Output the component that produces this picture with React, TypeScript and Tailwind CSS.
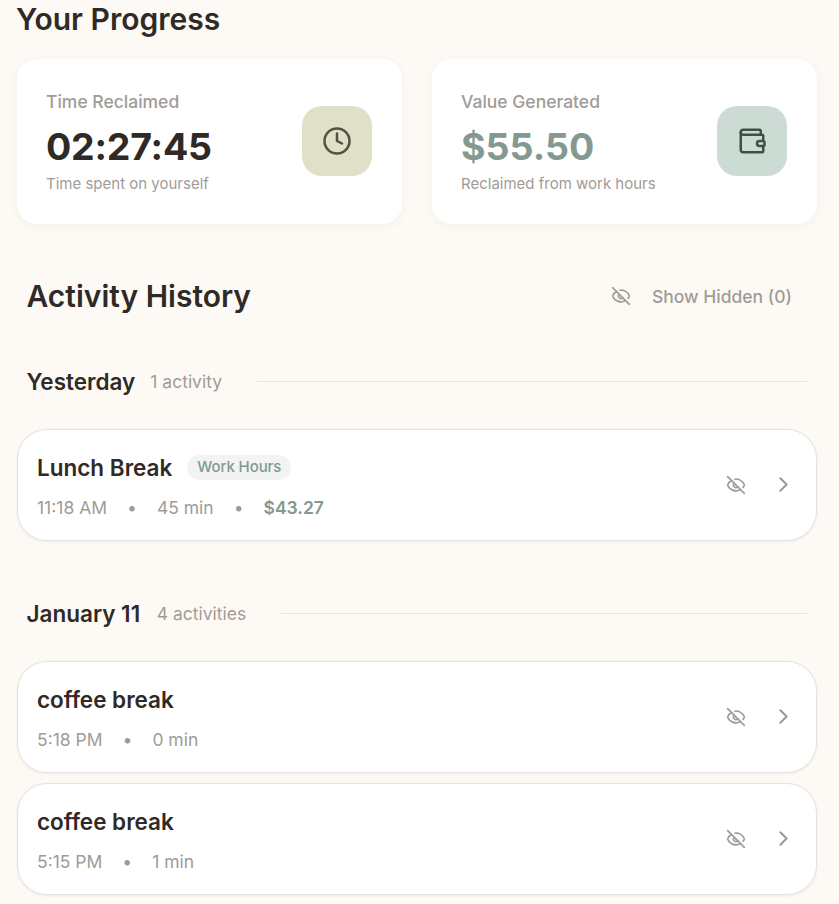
import React from "react";
import { Clock, Wallet, EyeOff, ChevronRight } from "lucide-react";

function StatCard({ label, value, note, accent, children }: { label: string; value: string; note: string; accent?: boolean; children: React.ReactNode }) {
  return (
    <div className="flex h-[165px] w-[385px] items-start justify-between rounded-[20px] bg-white pr-[30px] pl-[29px] shadow-[0_2px_10px_rgba(60,50,40,0.05)]">
      <div className="mt-[30px] whitespace-nowrap">
        <div className="text-[17.5px] leading-[25px] font-medium text-[#a19b96]">{label}</div>
        <div className={accent ? "mt-[10px] text-[37.5px] leading-[45px] font-bold text-[#84998f]" : "mt-[10px] text-[37.5px] leading-[45px] font-bold tracking-[-0.2px] text-[#2f2a26]"}>{value}</div>
        <div className="mt-[5px] text-[15px] leading-5 text-[#a19b96]">{note}</div>
      </div>
      {children}
    </div>
  );
}

function DayHeader({ title, count, wide }: { title: string; count: string; wide?: boolean }) {
  return (
    <div className="flex h-[35px] items-center pr-[10px] pl-[9.5px] whitespace-nowrap">
      <h3 className="text-[22.5px] font-semibold">{title}</h3>
      <span className={wide ? "ml-[16.5px] pt-[2px] text-[17.5px] text-[#a19b96]" : "ml-[15px] pt-[2px] text-[17.5px] text-[#a19b96]"}>{count}</span>
      <div className="ml-[35px] h-px flex-1 bg-[#e6e3de]" />
    </div>
  );
}

function Activity({ title, time, duration, value }: { title: string; time: string; duration: string; value?: string }) {
  return (
    <div className="flex h-[112px] items-center justify-between rounded-[30px] border border-[#e5e2df] bg-white pr-[20px] pl-[19px] shadow-[0_1px_3px_rgba(60,50,40,0.08)]">
      <div className="whitespace-nowrap">
        <div className="flex h-[35px] items-center gap-[15px]">
          <h4 className="text-[22.5px] font-semibold">{title}</h4>
          {value && <span className="flex h-[25px] items-center rounded-full bg-[#f1f4f3] px-[10px] text-[15px] font-medium tracking-[-0.1px] text-[#84998f]">Work Hours</span>}
        </div>
        <div className="mt-[10px] flex h-[25px] items-center gap-[20px] pt-[2px] text-[17.5px] text-[#a19b96]">
          <span>{time}</span><span>•</span><span>{duration}</span>
          {value && <><span>•</span><span className="font-semibold text-[#84998f]">{value}</span></>}
        </div>
      </div>
      <div className="flex items-center gap-[25px] text-[#a19b96]">
        <EyeOff size={20} strokeWidth={2} />
        <ChevronRight className="mb-px" size={25} strokeWidth={2} />
      </div>
    </div>
  );
}

export default function App() {
  return (
    <main className="h-[904px] overflow-hidden bg-[#fdfaf5] pr-[22px] pl-[17px] font-[Inter,sans-serif] text-[#2f2a26] antialiased">
      <h1 className="-ml-px h-[59px] pt-[1px] text-[30px] leading-[37px] font-semibold">Your Progress</h1>
      <section className="flex justify-between">
        <StatCard label="Time Reclaimed" value="02:27:45" note="Time spent on yourself">
          <div className="mt-[47px] flex size-[70px] items-center justify-center rounded-[20px] bg-[#e0dfc8] text-[#525142]"><Clock size={30} /></div>
        </StatCard>
        <StatCard label="Value Generated" value="$55.50" note="Reclaimed from work hours" accent>
          <div className="mt-[47px] flex size-[70px] items-center justify-center rounded-[20px] bg-[#ccdcd4] text-[#3d5148]"><Wallet size={30} /></div>
        </StatCard>
      </section>
      <header className="mt-[50px] flex h-[45px] items-center justify-between pr-[25px] pl-[9.5px]">
        <h2 className="text-[30px] font-semibold">Activity History</h2>
        <div className="flex items-center gap-[21px] text-[17.5px] font-medium text-[#a19b96]"><EyeOff className="mb-[2px]" size={20} /><span className="pt-px">Show Hidden (0)</span></div>
      </header>
      <section className="mt-[45px]">
        <DayHeader title="Yesterday" count="1 activity" />
        <div className="mt-[30px]"><Activity title="Lunch Break" time="11:18 AM" duration="45 min" value="$43.27" /></div>
      </section>
      <section className="mt-[55px]">
        <DayHeader title="January 11" count="4 activities" wide />
        <div className="mt-[30px] flex flex-col gap-[10px]">
          <Activity title="coffee break" time="5:18 PM" duration="0 min" />
          <Activity title="coffee break" time="5:15 PM" duration="1 min" />
        </div>
      </section>
    </main>
  );
}
